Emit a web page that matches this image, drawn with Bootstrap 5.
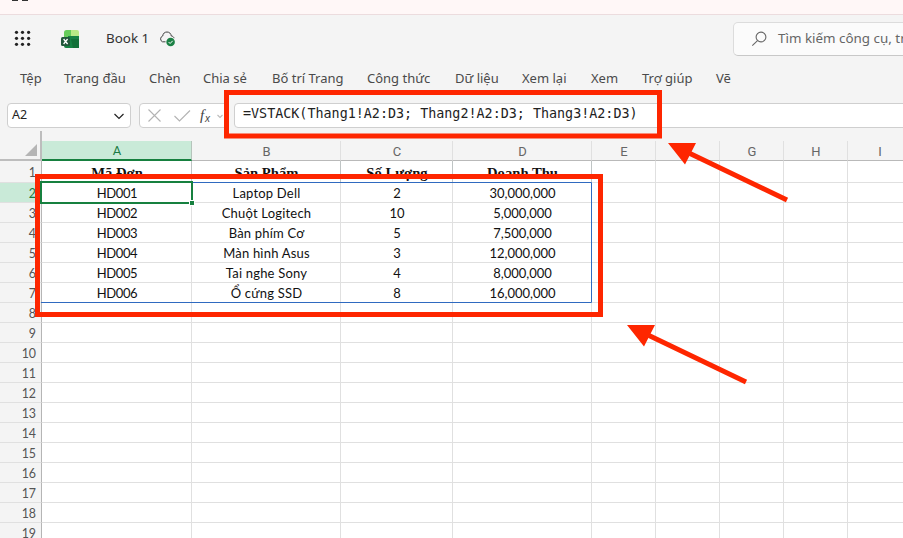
<!DOCTYPE html>
<html lang="vi">
<head>
<meta charset="utf-8">
<title>Book 1</title>
<link href="https://cdn.jsdelivr.net/npm/bootstrap@5.3.0/dist/css/bootstrap.min.css" rel="stylesheet">
<style>
body{width:903px;height:538px;background:#f4f4f4;font-family:"Noto Sans","Open Sans",sans-serif;font-size:13px;color:#444}
.strip{height:15px;background:#fff7f7;border-bottom:1px solid #ecdcde;padding-left:12px}
.strip i{width:6px;height:1px;background:#333}
.topbar{height:47px;padding-left:14px}
.book{font-size:13.4px;color:#333;margin-left:26px;width:53px}
.xl{margin-left:30px}
.search{width:200px;height:34px;background:#fbfbfb;border:1px solid #dcdcdc;border-bottom-color:#c8c8c8;border-radius:5px;font-size:13.4px;color:#666;margin-left:auto;margin-right:-30px}
.search svg{margin-left:17px;margin-right:11px}
.tabs{height:32px;display:grid;grid-template-columns:44px 85px 54px 69px 95px 88px 67px 69px 51px 74px 60px;padding:2px 0 0 20px;font-size:13px;color:#4a4a4a}
.fbar{height:37px;padding:9px 0 0 7px}
.fbox{height:25px;background:#fff;border:1px solid #cfcfcf;border-radius:4px}
.namebox{width:124px;font-size:12.5px;color:#222;padding:0 5px 0 4px}
.fxbox{width:89px;margin-left:8px;padding-left:8px}
.formula{width:680px;margin-left:6px;padding-left:8px;font-family:"DejaVu Sans Mono",monospace;font-size:13.39px;line-height:20px;color:#222;white-space:pre}
.gridtop{height:10px}
.gridtop span{width:42px;border-right:2px solid #bdbdbd}
.sheet{table-layout:fixed;width:912px;border-collapse:separate;border-spacing:0;font-family:Lato,"Noto Sans",sans-serif;font-size:13px;color:#111;background:#fff}
.sheet th,.sheet td{padding:2px 0 0 1px;height:20px;line-height:17px;text-align:center;border-right:1px solid #e0e0e0;border-bottom:1px solid #e0e0e0;overflow:hidden;white-space:nowrap;font-weight:400}
.sheet thead th{background:#f4f4f4;font-family:Roboto,sans-serif;font-size:13px;color:#666;border-bottom-color:#b9b9b9;line-height:17px}
.sheet thead th.pick{background:#c9ead8;color:#1b7a43;border-bottom:2px solid #16803f;border-right-color:#b5c4bb;line-height:16px}
.sheet thead th.rowhead{width:42px;padding:0;border-right:2px solid #bdbdbd;border-bottom:2px solid #bdbdbd}
.rowhead svg{margin-right:2px}
.sheet tbody th{background:#f4f4f4;color:#555;text-align:right;padding-right:5px;border-right:1px solid #b5b5b5;font-size:12.4px}
.sheet tbody tr.titles>*{height:22px;padding-top:3px;line-height:18px}
.sheet tr.titles td{font-family:"Liberation Serif",serif;font-weight:700;font-size:14.67px}
.sheet tbody tr.titles td:nth-child(-n+5){border-right-color:#bfc4c4}
.sheet tbody tr:not(.titles) td:nth-child(2){letter-spacing:-.4px}
.sheet tbody tr:not(.titles) td:nth-child(3){letter-spacing:.2px}
.sheet tbody tr.now th{background:#c9ead8;color:#1b7a43}
.overlay{position:absolute;left:0;top:0;pointer-events:none}
</style>
<script src="https://cdn.jsdelivr.net/npm/bootstrap@5.3.0/dist/js/bootstrap.bundle.min.js"></script>
</head>
<body class="position-relative overflow-hidden">
<div class="strip d-flex gap-1"><i></i><i></i></div>
<header class="topbar d-flex align-items-center">
  <svg width="17" height="17" fill="#222"><g><circle cx="2.5" cy="2.3" r="1.6"/><circle cx="8.5" cy="2.3" r="1.6"/><circle cx="14.6" cy="2.3" r="1.6"/><circle cx="2.5" cy="8.3" r="1.6"/><circle cx="8.5" cy="8.3" r="1.6"/><circle cx="14.6" cy="8.3" r="1.6"/><circle cx="2.5" cy="14.3" r="1.6"/><circle cx="8.5" cy="14.3" r="1.6"/><circle cx="14.6" cy="14.3" r="1.6"/></g></svg>
  <svg class="xl" width="19" height="18"><path d="M3 2.5Q3 0 5.5 0H10V9H3z" fill="#66cc5b"/><path d="M10 0h6q2 0 2 2v4h-8z" fill="#b8e986"/><path d="M3 7.500h4V6h11v10q0 2-2 2H5q-2 0-2-2z" fill="#168243"/><path d="M10 9h8v9h-6z" fill="#127038"/><rect x="0" y="7" width="9" height="9" rx="1.500" fill="#21573b"/><path d="M2.600 9l4 5M6.600 9l-4 5" stroke="#fff" stroke-width="1.300"/></svg>
  <span class="book text-nowrap">Book 1</span>
  <svg width="17" height="16" fill="none"><path d="M6.500 10.800H3.500A3.100 3.100 0 0 1 3.700 5C4 2.400 5.700 1 8 1s4 1.500 4.300 4c1.500.1 2.500 1 2.700 2.200" stroke="#444"/><circle cx="11.600" cy="11" r="4.300" fill="#1b8044"/><path d="M9.600 11l1.500 1.500 2.600-2.700" stroke="#fff"/></svg>
  <div class="search d-flex align-items-center"><svg class="flex-shrink-0" width="16" height="16" fill="none" stroke="#666" stroke-width="1.100"><circle cx="10" cy="6" r="4.900"/><path d="M6.500 9.700L1.300 14.700"/></svg><span class="text-nowrap">Tìm kiếm công cụ, trợ giúp</span></div>
</header>
<nav class="tabs align-items-center text-nowrap"><span>Tệp</span><span>Trang đầu</span><span>Chèn</span><span>Chia sẻ</span><span>Bố trí Trang</span><span>Công thức</span><span>Dữ liệu</span><span>Xem lại</span><span>Xem</span><span>Trợ giúp</span><span>Vẽ</span></nav>
<div class="fbar d-flex">
  <div class="fbox namebox d-flex align-items-center justify-content-between flex-shrink-0"><span>A2</span><svg width="12" height="12" fill="none" stroke="#222" stroke-width="1.200"><path d="M1.500 4l4.500 4.500L10.500 4"/></svg></div>
  <div class="fbox fxbox d-flex align-items-center flex-shrink-0"><svg width="80" height="20" fill="none" stroke="#b3b3b3" stroke-width="1.100"><path d="M.5 3.500l12 12M12.500 3.500l-12 12M26.500 10l5 5L42 4.500"/><path d="M69.500 9l2.500 2.500L74.500 9" stroke="#bbb"/><text x="52" y="14" fill="#444" stroke="none" font-family="Liberation Serif,serif" font-style="italic" font-size="15">f</text><text x="57" y="15.500" fill="#444" stroke="none" font-family="Liberation Sans,sans-serif" font-style="italic" font-size="10">x</text></svg></div>
  <div class="fbox formula flex-shrink-0">=VSTACK(Thang1!A2:D3; Thang2!A2:D3; Thang3!A2:D3)</div>
</div>
<div class="gridtop d-flex"><span></span></div>
<table class="sheet">
<colgroup><col style="width:42px"><col style="width:150px"><col style="width:149px"><col style="width:112px"><col style="width:139px"><col span="5" style="width:64px"></colgroup>
<thead><tr><th class="rowhead"><svg class="d-block ms-auto" width="13" height="13"><path d="M12 0v12H0z" fill="#b5b5b5"/></svg></th><th class="pick">A</th><th>B</th><th>C</th><th>D</th><th>E</th><th>F</th><th>G</th><th>H</th><th>I</th></tr></thead>
<tbody>
<tr class="titles"><th>1</th><td>Mã Đơn</td><td>Sản Phẩm</td><td>Số Lượng</td><td>Doanh Thu</td><td></td><td></td><td></td><td></td><td></td></tr>
<tr class="now"><th>2</th><td>HD001</td><td>Laptop Dell</td><td>2</td><td>30,000,000</td><td></td><td></td><td></td><td></td><td></td></tr>
<tr><th>3</th><td>HD002</td><td>Chuột Logitech</td><td>10</td><td>5,000,000</td><td></td><td></td><td></td><td></td><td></td></tr>
<tr><th>4</th><td>HD003</td><td>Bàn phím Cơ</td><td>5</td><td>7,500,000</td><td></td><td></td><td></td><td></td><td></td></tr>
<tr><th>5</th><td>HD004</td><td>Màn hình Asus</td><td>3</td><td>12,000,000</td><td></td><td></td><td></td><td></td><td></td></tr>
<tr><th>6</th><td>HD005</td><td>Tai nghe Sony</td><td>4</td><td>8,000,000</td><td></td><td></td><td></td><td></td><td></td></tr>
<tr><th>7</th><td>HD006</td><td>Ổ cứng SSD</td><td>8</td><td>16,000,000</td><td></td><td></td><td></td><td></td><td></td></tr>
<tr><th>8</th><td></td><td></td><td></td><td></td><td></td><td></td><td></td><td></td><td></td></tr>
<tr><th>9</th><td></td><td></td><td></td><td></td><td></td><td></td><td></td><td></td><td></td></tr>
<tr><th>10</th><td></td><td></td><td></td><td></td><td></td><td></td><td></td><td></td><td></td></tr>
<tr><th>11</th><td></td><td></td><td></td><td></td><td></td><td></td><td></td><td></td><td></td></tr>
<tr><th>12</th><td></td><td></td><td></td><td></td><td></td><td></td><td></td><td></td><td></td></tr>
<tr><th>13</th><td></td><td></td><td></td><td></td><td></td><td></td><td></td><td></td><td></td></tr>
<tr><th>14</th><td></td><td></td><td></td><td></td><td></td><td></td><td></td><td></td><td></td></tr>
<tr><th>15</th><td></td><td></td><td></td><td></td><td></td><td></td><td></td><td></td><td></td></tr>
<tr><th>16</th><td></td><td></td><td></td><td></td><td></td><td></td><td></td><td></td><td></td></tr>
<tr><th>17</th><td></td><td></td><td></td><td></td><td></td><td></td><td></td><td></td><td></td></tr>
<tr><th>18</th><td></td><td></td><td></td><td></td><td></td><td></td><td></td><td></td><td></td></tr>
<tr><th>19</th><td></td><td></td><td></td><td></td><td></td><td></td><td></td><td></td><td></td></tr>
</tbody></table>
<!-- selection outline, spill range and red annotations above the sheet -->
<svg class="overlay" width="903" height="538" fill="none">
  <path d="M41 182.500H591.500V302.500H41" stroke="#2f6ac0"/>
  <rect x="41" y="182" width="151" height="21" stroke="#16803f" stroke-width="2"/>
  <rect x="189.500" y="200.500" width="5" height="5" fill="#16803f" stroke="#fff"/>
  <g stroke="#fe2600" stroke-width="5"><rect x="226.500" y="92.500" width="433" height="43.500"/><rect x="37.500" y="176.500" width="563" height="138"/><path d="M787 200L690 153.500M746 382L649 335.500"/></g>
  <path d="M668 143h28l-11 21.500zM627 325h28l-11 21.500z" fill="#fe2600"/>
</svg>
</body>
</html>
